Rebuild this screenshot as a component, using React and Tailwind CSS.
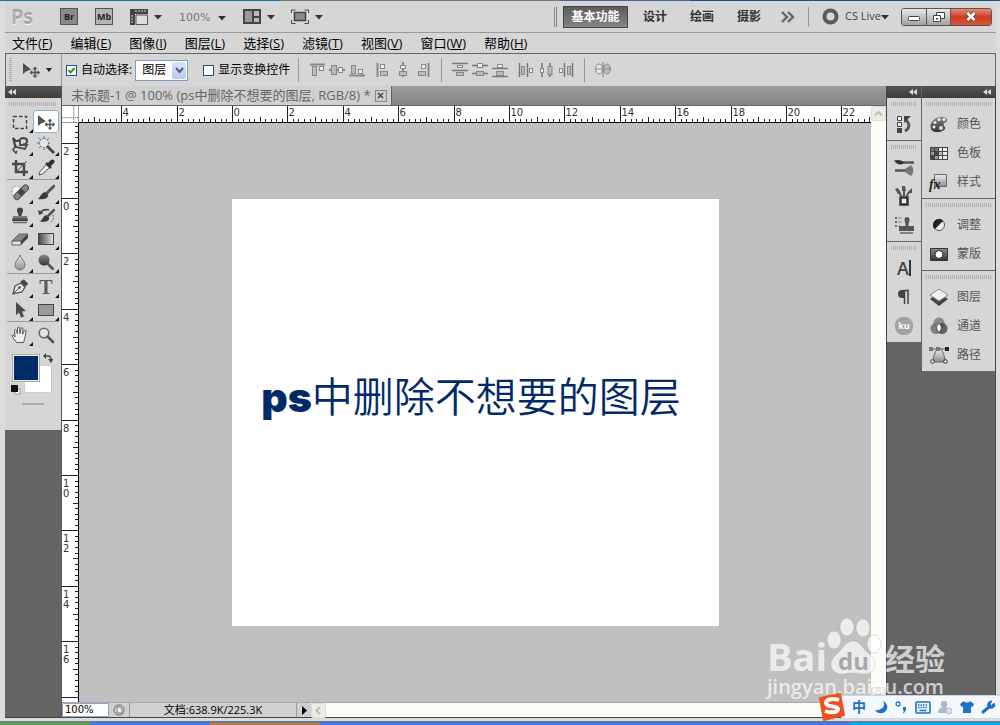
import React, { useState } from 'react';
import clsx from 'clsx';

const menus = [
  ['文件', 'F'],
  ['编辑', 'E'],
  ['图像', 'I'],
  ['图层', 'L'],
  ['选择', 'S'],
  ['滤镜', 'T'],
  ['视图', 'V'],
  ['窗口', 'W'],
  ['帮助', 'H'],
];

/* ---------- icons ---------- */

const Svg = ({ w = 18, h = 18, children, className }) => (
  <svg width={w} height={h} viewBox={`0 0 ${w} ${h}`} fill="none" className={clsx('shrink-0', className)} aria-hidden="true">
    {children}
  </svg>
);

const Defs = () => (
  <svg width="0" height="0" className="absolute" aria-hidden="true">
    <defs>
      <linearGradient id="dark" x1="0" y1="0" x2="0" y2="1">
        <stop offset="0" stopColor="#8a8a8a" />
        <stop offset="1" stopColor="#333" />
      </linearGradient>
      <linearGradient id="ramp" x1="0" y1="0" x2="1" y2="0">
        <stop offset="0" stopColor="#444" />
        <stop offset="1" stopColor="#e4e4e4" />
      </linearGradient>
      <linearGradient id="soft" x1="0" y1="0" x2="0" y2="1">
        <stop offset="0" stopColor="#f0f0f0" />
        <stop offset="1" stopColor="#8c8c8c" />
      </linearGradient>
    </defs>
  </svg>
);

const Caret = () => (
  <Svg w={8} h={6}><path d="M0 1h8L4 5.500z" fill="#333" /></Svg>
);

const MoveIcon = () => (
  <Svg w={18} h={16}>
    <path d="M1 1v11l3-2.500 5-2z" fill="#505050" />
    <path d="M13 6v9M8.500 10.500h9" stroke="#555" strokeWidth="1.500" />
    <path d="M13 4.500l-2.500 2.700h5zM13 16l-2.500-2.500h5zM7.500 10.500l2.700-2.500v5zM18 10.500l-2.500-2.500v5z" fill="#555" />
  </Svg>
);

const tools = {
  marquee: (
    <Svg><rect x="2.500" y="3.500" width="13" height="12" stroke="#444" strokeWidth="1.500" strokeDasharray="3.500 2" /></Svg>
  ),
  move: <MoveIcon />,
  lasso: (
    <Svg>
      <path d="M2 2l3 3 4-1v5l7 0-2 4-9-2z" stroke="#4a4a4a" strokeWidth="1.800" fill="#d9d9d9" />
      <path d="M9 3.500c1-2 7-2 7 1.500 0 3-2 4-4 3" stroke="#4a4a4a" strokeWidth="2.200" />
      <path d="M2 2l2 9-2 3 3 3 1-2" stroke="#4a4a4a" strokeWidth="1.600" />
    </Svg>
  ),
  wand: (
    <Svg>
      <circle cx="7" cy="7" r="4.500" fill="#e6e6e6" stroke="#777" strokeDasharray="1.500 1.500" />
      <path d="M7 0v3M7 11v3M0 7h3M11 7h2M2 2l2 2M12 2l-2 2M2 12l2-2" stroke="#777" />
      <path d="M10 10l7 7" stroke="#444" strokeWidth="2.800" />
    </Svg>
  ),
  crop: (
    <Svg>
      <path d="M5 1v12h12M1 5h12v12" stroke="#4a4a4a" strokeWidth="2.500" />
      <path d="M5 13L16 2" stroke="#4a4a4a" />
    </Svg>
  ),
  dropper: (
    <Svg>
      <path d="M2 16l1-3.500L10 5l3 3-7.500 7z" fill="#f0f0f0" stroke="#555" />
      <path d="M9 4l5 5M11 6l3.500-3.500" stroke="#333" strokeWidth="2.500" />
      <path d="M12.500 5.500L15.500 2.500" stroke="#333" strokeWidth="4" strokeLinecap="round" />
    </Svg>
  ),
  heal: (
    <Svg>
      <path d="M9 3c-3-2-8-1-8 4 0 4 1 6 4 7" stroke="#888" strokeDasharray="2 1.500" fill="#f4f4f4" />
      <path d="M6 12.500L14.500 4" stroke="#555" strokeWidth="7" strokeLinecap="round" />
      <path d="M6 12.500L14.500 4" stroke="#858585" strokeWidth="5" strokeLinecap="round" />
      <rect x="7.500" y="5.500" width="5.500" height="5.500" fill="#444" transform="rotate(45 10.250 8.250)" />
    </Svg>
  ),
  brush: (
    <Svg>
      <path d="M17 2L9 10" stroke="#555" strokeWidth="3" strokeLinecap="round" />
      <path d="M8 8l3.500 3.500c-1.500 4-5 4-11 3.500 3-1 3-6 7.500-7z" fill="#3a3a3a" />
    </Svg>
  ),
  stamp: (
    <Svg>
      <path d="M6 3.500a3 3 0 016 0c0 2-1.500 2.500-1.500 6h-3c0-3.500-1.500-4-1.500-6z" fill="#444" />
      <path d="M2 9h14l1 5H1z" fill="url(#dark)" />
      <path d="M2 15.500h14" stroke="#666" strokeWidth="1.500" />
    </Svg>
  ),
  history: (
    <Svg>
      <path d="M17 3l-7 7" stroke="#555" strokeWidth="2.500" strokeLinecap="round" />
      <path d="M9 8l3.500 3.500c-2 4-6 3.500-10 3 3-1 3-5 6.500-6.500z" fill="#3a3a3a" />
      <path d="M3 6c2-3 5-4 9-3" stroke="#444" strokeWidth="1.500" />
      <path d="M1 3l1 5 4.500-2z" fill="#444" />
      <path d="M16 8c1 3 0 6-3 8" stroke="#555" strokeDasharray="1.500 1.500" />
    </Svg>
  ),
  eraser: (
    <Svg>
      <path d="M1 11L8 4h9l-7 7z" fill="#858585" stroke="#666" />
      <path d="M1 11h9v4H1z" fill="#e4e4e4" stroke="#666" />
      <path d="M10 11l7-7v4l-7 7z" fill="#444" />
    </Svg>
  ),
  gradient: (
    <Svg><rect x="1.500" y="3.500" width="15" height="11" fill="url(#ramp)" stroke="#444" /></Svg>
  ),
  blur: (
    <Svg><path d="M9 2c1 4 5 6 5 10a5 5 0 01-10 0c0-4 4-6 5-10z" fill="url(#soft)" stroke="#777" /></Svg>
  ),
  dodge: (
    <Svg>
      <path d="M9.500 9.500l7 7" stroke="#555" strokeWidth="2.500" />
      <circle cx="7" cy="7" r="5.500" fill="url(#dark)" />
    </Svg>
  ),
  pen: (
    <Svg>
      <path d="M2 16l2-8 6-3 4 4-3 5z" fill="#e8e8e8" stroke="#555" strokeWidth="1.300" />
      <path d="M2 16l6-6" stroke="#444" />
      <circle cx="8.500" cy="9.500" r="1.300" fill="#444" />
      <path d="M10 3l5 5M12 2l4.500 4.500" stroke="#444" strokeWidth="2" />
    </Svg>
  ),
  type: <span className="font-['Liberation_Serif',serif] text-xl leading-none font-bold text-[#5c5c5c]">T</span>,
  path: (
    <Svg><path d="M5 1v13l3-2.500 2 5 3-1-2-5 4-.500z" fill="#4a4a4a" /></Svg>
  ),
  shape: (
    <Svg><rect x="1.500" y="3.500" width="15" height="11" fill="#9a9a9a" stroke="#444" /></Svg>
  ),
  hand: (
    <Svg>
      <path
        d="M5.500 16.500c-1-2-4-4.500-4.500-7 .500-1.200 2-.500 3 1.500L3.500 4.500c.200-1.300 1.700-1.300 2 0L6.500 8V2c.300-1.300 1.900-1.300 2.100 0L9 7.500l1-5c.500-1.200 2-.900 2 .300l-.400 5.400 1.800-3.500c.700-1 2-.500 1.700.700-.700 3-1.100 7.600-2.600 11.100z"
        fill="#eee" stroke="#555"
      />
    </Svg>
  ),
  zoom: (
    <Svg>
      <circle cx="7" cy="7" r="4.800" stroke="#666" strokeWidth="1.500" fill="#e2e2e2" />
      <path d="M10.500 10.500l5.500 5.500" stroke="#555" strokeWidth="2.500" strokeLinecap="round" />
    </Svg>
  ),
};

const toolGroups = [
  ['marquee', 'move', 'lasso', 'wand', 'crop', 'dropper'],
  ['heal', 'brush', 'stamp', 'history', 'eraser', 'gradient', 'blur', 'dodge'],
  ['pen', 'type', 'path', 'shape'],
  ['hand', 'zoom'],
];

/* One drawing per align / distribute command, two boxes and a guide line */
const alignShapes = {
  top: <><path d="M1 2.500h15" stroke="#888" strokeWidth="2" /><rect x="3.500" y="4.500" width="4" height="9" fill="#bbb" stroke="#888" /><rect x="10.500" y="4.500" width="4" height="4" fill="#eee" stroke="#888" /></>,
  middle: <><path d="M0 8h16" stroke="#888" strokeWidth="2" /><rect x="2.500" y="3.500" width="5" height="9" fill="#bbb" stroke="#888" /><rect x="9.500" y="5.500" width="4" height="5" fill="#eee" stroke="#888" /></>,
  bottom: <><path d="M0 13.500h16" stroke="#888" strokeWidth="2" /><rect x="2.500" y="3.500" width="4" height="8" fill="#bbb" stroke="#888" /><rect x="9.500" y="7.500" width="4" height="4" fill="#eee" stroke="#888" /></>,
  left: <><path d="M2.500 1v14" stroke="#888" strokeWidth="2" /><rect x="5.500" y="2.500" width="4" height="4" fill="#eee" stroke="#888" /><rect x="5.500" y="9.500" width="7" height="4" fill="#bbb" stroke="#888" /></>,
  center: <><path d="M8 0v15" stroke="#888" strokeWidth="2" /><rect x="5.500" y="3.500" width="5" height="3" fill="#eee" stroke="#888" /><rect x="4.500" y="9.500" width="7" height="4" fill="#bbb" stroke="#888" /></>,
  right: <><path d="M13.500 1v14" stroke="#888" strokeWidth="2" /><rect x="6.500" y="2.500" width="4" height="4" fill="#eee" stroke="#888" /><rect x="3.500" y="9.500" width="7" height="4" fill="#bbb" stroke="#888" /></>,
  distTop: <><path d="M0 1.500h16M0 8.500h16" stroke="#777" strokeWidth="1.500" /><rect x="5.500" y="3.500" width="5" height="2" fill="#eee" stroke="#888" /><rect x="4.500" y="10.500" width="7" height="3" fill="#bbb" stroke="#888" /></>,
  distMiddle: <><path d="M0 3.500h16M0 11.500h16" stroke="#777" strokeWidth="1.500" /><rect x="5.500" y="1.500" width="5" height="4" fill="#eee" stroke="#888" /><rect x="4.500" y="9.500" width="7" height="4" fill="#bbb" stroke="#888" /></>,
  distBottom: <><path d="M0 6.500h16M0 14.500h16" stroke="#777" strokeWidth="1.500" /><rect x="5.500" y="2.500" width="5" height="3" fill="#eee" stroke="#888" /><rect x="4.500" y="9.500" width="7" height="4" fill="#bbb" stroke="#888" /></>,
  distLeft: <><path d="M1.500 1v14M9.500 1v14" stroke="#777" strokeWidth="1.500" /><rect x="3.500" y="4.500" width="3" height="8" fill="#bbb" stroke="#888" /><rect x="11.500" y="6.500" width="3" height="4" fill="#eee" stroke="#888" /></>,
  distCenter: <><path d="M4 1v14M12 1v14" stroke="#777" strokeWidth="1.500" /><rect x="2.500" y="6.500" width="3" height="4" fill="#eee" stroke="#888" /><rect x="10" y="4.500" width="4" height="8" fill="#bbb" stroke="#888" /></>,
  distRight: <><path d="M6.500 1v14M14.500 1v14" stroke="#777" strokeWidth="1.500" /><rect x="1.500" y="6.500" width="3" height="4" fill="#eee" stroke="#888" /><rect x="9.500" y="4.500" width="3" height="8" fill="#bbb" stroke="#888" /></>,
  auto: <><path d="M8 0v15" stroke="#777" /><ellipse cx="4" cy="7" rx="3.500" ry="5" fill="#e4e4e4" stroke="#888" /><ellipse cx="12" cy="7" rx="3.500" ry="5" fill="#bbb" stroke="#888" /><path d="M1 7h14" stroke="#888" /></>,
};

const alignGroups = [
  [['top', 'middle', 'bottom'], ['left', 'center', 'right']],
  [['distTop', 'distMiddle', 'distBottom'], ['distLeft', 'distCenter', 'distRight']],
  [['auto']],
];

const panelIcons = {
  历史记录: (
    <Svg w={20} h={20}>
      <path d="M3.500 2.500h4v4h-4zM3.500 8.500h4v4h-4z" fill="#eee" stroke="#444" />
      <path d="M3 14h5v5H3z" fill="#444" />
      <path d="M11 17c5-3 5-7 1-11" stroke="#555" strokeWidth="2.800" />
      <path d="M10 9V2h7z" fill="#444" />
    </Svg>
  ),
  画笔: (
    <Svg w={20} h={20}>
      <path d="M8 5.500h12" stroke="#555" strokeWidth="2.500" />
      <path d="M0 3.500c4-1 7-1 10 2-3 3.500-7 2.500-10-2z" fill="#333" />
      <path d="M1 13.500h11" stroke="#555" strokeWidth="2.500" />
      <path d="M11 12l6-4c3 3 3 8 0 11l-6-4z" fill="#777" />
    </Svg>
  ),
  画笔预设: (
    <Svg w={20} h={20}>
      <path d="M6.500 11.500h7v7h-7z" fill="#eee" stroke="#333" strokeWidth="2.500" />
      <path d="M8 11L4 5M10 11V4M12 11l4-6" stroke="#555" strokeWidth="2" />
      <path d="M1 3l3-1 3 5-3 1zM8 0h3l1 5H8zM18 2l0 5-5 0z" fill="#555" />
    </Svg>
  ),
  仿制源: (
    <Svg w={20} h={20}>
      <path d="M1 3h2M1 7h2M1 11h2" stroke="#444" strokeWidth="1.500" />
      <path d="M4 3h4M4 7h4M4 11h2" stroke="#888" />
      <path d="M10.500 4.500a2.500 2.500 0 015 0c0 2-1 3-1 6.500H20v5H5v-5h6.500c0-3.500-1-4.500-1-6.500z" fill="#555" />
      <path d="M6 18h13" stroke="#666" strokeWidth="1.500" />
    </Svg>
  ),
  字符: <span className="border-r-2 border-[#333] font-['Open_Sans',sans-serif] text-lg leading-4 font-semibold text-[#444]">A</span>,
  段落: (
    <Svg w={20} h={20}>
      <path d="M10 3H8a4 4 0 000 8h2z" fill="#444" />
      <path d="M9 3.500h6M10.500 3v14M14 3v14" stroke="#444" strokeWidth="1.500" />
    </Svg>
  ),
  ku: (
    <span className="flex h-[18px] w-[18px] items-center justify-center rounded-[8px] bg-[#a3a3a3] font-['Open_Sans',sans-serif] text-[9px] leading-none font-bold text-white">
      ku
    </span>
  ),
  颜色: (
    <Svg w={20} h={20}>
      <path d="M2 15C0 10 4 4 11 3c7-1 9 4 6 5s-3 3-1 5-4 6-9 5c-3 0-4-1-5-3z" fill="url(#dark)" />
      <circle cx="6" cy="8.500" r="1.500" fill="#eee" />
      <circle cx="10" cy="5.500" r="1.500" fill="#eee" />
      <circle cx="15" cy="5.500" r="1.500" fill="#eee" />
      <circle cx="5" cy="13" r="1.500" fill="#eee" />
      <circle cx="12" cy="14" r="2" fill="#ddd" />
    </Svg>
  ),
  色板: (
    <Svg w={20} h={20}>
      <path d="M1 4h18v13H1z" fill="#444" />
      <path d="M2 5h3v3H2zM6 5h3v3H6z" fill="#777" />
      <path d="M10 5h3v3h-3zM14 5h4v3h-4zM14 9h4v3h-4zM14 13h4v3h-4zM10 13h3v3h-3z" fill="#eee" />
      <path d="M2 9h3v3H2zM6 13h3v3H6z" fill="#999" />
      <path d="M10 9h3v3h-3z" fill="#bbb" />
    </Svg>
  ),
  样式: (
    <span className="relative block h-5 w-5">
      <Svg w={20} h={20}><path d="M5.500 2.500h12v12h-12z" fill="url(#soft)" stroke="#666" /></Svg>
      <span className="absolute bottom-0 left-0 font-['Liberation_Serif',serif] text-sm leading-none font-bold text-[#222] italic">fx</span>
    </span>
  ),
  调整: (
    <Svg w={20} h={20}>
      <circle cx="10" cy="10" r="5.500" fill="#eee" stroke="#555" />
      <path d="M5.700 14.300A6 6 0 0114.300 5.700z" fill="#222" />
    </Svg>
  ),
  蒙版: (
    <Svg w={20} h={20}>
      <path d="M1.500 4.500h17v12h-17z" fill="url(#dark)" stroke="#333" />
      <circle cx="10" cy="10.500" r="4" fill="#fff" stroke="#222" />
    </Svg>
  ),
  图层: (
    <Svg w={20} h={20}>
      <path d="M1 12l9-6 9 6-9 7z" fill="#444" />
      <path d="M1 8l9-6 9 6-9 6z" fill="#f2f2f2" stroke="#888" />
    </Svg>
  ),
  通道: (
    <Svg w={20} h={20}>
      <circle cx="10" cy="7" r="5.500" fill="#888" />
      <circle cx="7" cy="12.500" r="5.500" fill="#777" opacity=".9" />
      <circle cx="13" cy="12.500" r="5.500" fill="#444" opacity=".8" />
      <path d="M10 8c2 2 3 4 0 8-3-4-2-6 0-8z" fill="#fff" />
    </Svg>
  ),
  路径: (
    <Svg w={20} h={20}>
      <path d="M4 17c0-6 2-9 4-13h4c2 4 4 7 4 13z" fill="url(#soft)" stroke="#666" />
      <path d="M2 4h16" stroke="#666" />
      <path d="M0 2h4v4H0zM7 2h4v4H7z" fill="#777" />
      <path d="M16 2h4v4h-4z" fill="#222" />
      <circle cx="3.500" cy="16.500" r="1.800" fill="#eee" stroke="#333" />
      <circle cx="16.500" cy="16.500" r="1.800" fill="#eee" stroke="#333" />
    </Svg>
  ),
};

const iconPanels = [['历史记录'], ['画笔', '画笔预设', '仿制源'], ['字符', '段落', 'ku']];
const labelPanels = [['颜色', '色板', '样式'], ['调整', '蒙版'], ['图层', '通道', '路径']];

/* ---------- small parts ---------- */

const Grip = () => (
  <div className="h-1 bg-[repeating-linear-gradient(90deg,#b2b2b2_0_1px,#d6d6d6_1px_2px)]" />
);

const Divider = () => <div className="h-6 w-px shrink-0 bg-[#999]" />;

const Collapse = ({ className }) => (
  <button aria-label="折叠面板" className={clsx('flex h-3 items-center bg-gradient-to-b from-[#555] to-[#3d3d3d]', className)}>
    <Svg w={8} h={6}><path d="M4 0v6L0 3zM8 0v6L4 3z" fill="#ddd" /></Svg>
  </button>
);

/* ---------- bars ---------- */

const TitleBar = () => (
  <header className="flex h-8 shrink-0 items-center border-b border-[#999] bg-[#d6d6d6] pr-1 pl-1.5">
    <span className="w-[50px] font-['Open_Sans',sans-serif] text-[20px] leading-none font-semibold text-[#adadad] [text-shadow:0_1px_0_#f4f4f4,0_-1px_0_#999]">Ps</span>
    <button aria-label="Bridge" className="flex h-[15px] w-4 items-center justify-center bg-[#8a8a8a] font-['Open_Sans',sans-serif] text-[9px] font-bold text-[#222] outline outline-[#555]">
      Br
    </button>
    <button aria-label="Mini Bridge" className="ml-[19px] flex h-[15px] w-4 items-center justify-center bg-[#b4b4b4] font-['Open_Sans',sans-serif] text-[9px] font-bold text-[#222] outline outline-[#555]">
      Mb
    </button>
    <button aria-label="查看额外内容" className="ml-[18px] flex items-center gap-1.5">
      <Svg w={18} h={16}>
        <path d="M0 0h18v5H0zM0 5h5v11H0z" fill="#444" />
        <path d="M6 1v2M9 1v2M12 1v2M15 1v2M1 7h2M1 10h2M1 13h2" stroke="#ddd" />
        <path d="M6 6h11.500v9.500H6z" fill="#ddd" stroke="#555" />
      </Svg>
      <Caret />
    </button>
    <button className="ml-[17px] flex items-center gap-2 pt-0.5 font-['DejaVu_Sans',sans-serif] text-[11px] leading-none text-[#777]">
      100%
      <Caret />
    </button>
    <button aria-label="排列文档" className="ml-[17px] flex items-center gap-1.5">
      <Svg w={18} h={16}>
        <path d="M0 0h18v15H0z" fill="#444" />
        <path d="M2 2h7v11H2z" fill="#999" />
        <path d="M11 2h5v5h-5zM11 9h5v4h-5z" fill="#bbb" />
      </Svg>
      <Caret />
    </button>
    <button aria-label="屏幕模式" className="ml-4 flex items-center gap-1.5">
      <Svg w={18} h={16}>
        <path d="M.5 4V1h4M13.500 1h4v3M17.500 11v3.500h-4M4.500 14.500h-4V11" stroke="#444" />
        <rect x="3.500" y="3.500" width="11" height="8" fill="#8a8a8a" stroke="#444" strokeWidth="1.500" />
      </Svg>
      <Caret />
    </button>

    <div className="ml-auto flex items-center">
      <div className="h-5 w-[3px] border-x border-[#888]" />
      <nav className="ml-1.5 flex items-center gap-[23px] text-xs font-bold text-[#333]">
        <button className="-mr-2 h-[22px] w-[65px] border border-[#444] bg-gradient-to-b from-[#5c5c5c] to-[#858585] text-white">基本功能</button>
        <button>设计</button>
        <button>绘画</button>
        <button>摄影</button>
      </nav>
      <button aria-label="更多工作区" className="ml-5">
        <Svg w={14} h={12}><path d="M1 1l5 5-5 5M7 1l5 5-5 5" stroke="#666" strokeWidth="2.400" /></Svg>
      </button>
      <div className="ml-[13px] h-5 w-px bg-[#999]" />
      <button className="ml-[13px] flex items-center gap-1.5 text-[11px] text-[#444]">
        <Svg w={17} h={17}><circle cx="8.500" cy="8.500" r="6" stroke="#5a5a5a" strokeWidth="4" /></Svg>
        <span className="flex items-center font-['Open_Sans',sans-serif]">CS Live<Caret /></span>
      </button>
      <div className="ml-3 flex h-[18px] overflow-hidden rounded-[3px] border border-[#555]">
        <button aria-label="最小化" className="flex w-6 items-center justify-center bg-gradient-to-b from-[#e8e8e8] to-[#a2a2a2] pt-1">
          <Svg w={12} h={5}><rect x=".5" y=".5" width="11" height="4" rx="1" fill="#fff" stroke="#444" /></Svg>
        </button>
        <button aria-label="还原" className="flex w-[25px] items-center justify-center border-x border-[#555] bg-gradient-to-b from-[#e8e8e8] to-[#a2a2a2]">
          <Svg w={13} h={12}>
            <path d="M4.500 1.500h8v6h-8z" fill="#fff" stroke="#444" />
            <path d="M1.500 4.500h7v6h-7z" fill="#fff" stroke="#444" />
            <path d="M4 7h2v1.500H4z" fill="#444" />
          </Svg>
        </button>
        <button aria-label="关闭" className="flex w-10 items-center justify-center bg-gradient-to-b from-[#e38a72] via-[#cf3a22] to-[#d2553a]">
          <Svg w={12} h={11}>
            <path d="M2.500 2l7 7M9.500 2l-7 7" stroke="#444" strokeWidth="4.500" />
            <path d="M2.500 2l7 7M9.500 2l-7 7" stroke="#fff" strokeWidth="2.800" />
          </Svg>
        </button>
      </div>
    </div>
  </header>
);

const MenuBar = () => (
  <nav className="flex h-5 shrink-0 items-center gap-[18px] bg-[#d6d6d6] pl-[7px] text-[13px] leading-5 text-black">
    {menus.map(([label, key]) => (
      <button key={key} className="whitespace-nowrap">
        {label}(<u>{key}</u>)
      </button>
    ))}
  </nav>
);

const Check = ({ checked, onChange, children }) => (
  <label className="flex items-center gap-1 whitespace-nowrap">
    <span className="relative flex">
      <input
        type="checkbox"
        checked={checked}
        onChange={onChange}
        className="h-[11px] w-[11px] appearance-none border border-[#1d5281] bg-white"
      />
      {checked && (
        <Svg w={11} h={11} className="pointer-events-none absolute inset-0">
          <path d="M2.500 5l2 2.500 4-4.500" stroke="#21a121" strokeWidth="2" />
        </Svg>
      )}
    </span>
    {children}
  </label>
);

const OptionsBar = () => {
  const [autoSelect, setAutoSelect] = useState(true);
  const [showTransform, setShowTransform] = useState(false);

  return (
    <div className="flex h-[33px] shrink-0 items-center border border-b-0 border-[#666] bg-[#d6d6d6] pl-[3px] text-xs text-black">
      <div className="h-6 w-[3px] bg-[repeating-linear-gradient(#aaa_0_1px,#d6d6d6_1px_2px)]" />
      <button aria-label="移动工具" className="ml-2.5 flex items-center gap-1.5">
        <MoveIcon />
        <Svg w={6} h={4}><path d="M0 0h6L3 4z" fill="#222" /></Svg>
      </button>
      <div className="mx-[9px] mr-1 h-8 w-px bg-[#999]" />
      <Check checked={autoSelect} onChange={() => setAutoSelect(!autoSelect)}>自动选择:</Check>
      <div className="relative ml-[3px] flex">
        <select aria-label="自动选择" className="h-[21px] w-[53px] appearance-none border border-[#7f9db9] bg-white pl-1.5 text-xs">
          <option>图层</option>
          <option>组</option>
        </select>
        <span className="pointer-events-none absolute top-[2px] right-[2px] flex h-[17px] w-3.5 items-center justify-center rounded-xs bg-gradient-to-b from-[#dbe5fd] to-[#b4c8f5]">
          <Svg w={9} h={7}><path d="M1 1l3.500 4L8 1" stroke="#4d6185" strokeWidth="2" /></Svg>
        </span>
      </div>
      <div className="ml-[15px] flex">
        <Check checked={showTransform} onChange={() => setShowTransform(!showTransform)}>显示变换控件</Check>
      </div>
      <div className="ml-2 flex items-center gap-2.5">
        {alignGroups.map((group, i) => (
          <React.Fragment key={i}>
            <Divider />
            <div className="flex gap-2.5">
              {group.map((names) => (
                <div key={names[0]} className="flex gap-1">
                  {names.map((name) => (
                    <button key={name} aria-label={name}>
                      <Svg w={16} h={16}>{alignShapes[name]}</Svg>
                    </button>
                  ))}
                </div>
              ))}
            </div>
          </React.Fragment>
        ))}
      </div>
    </div>
  );
};

/* ---------- toolbox ---------- */

const Toolbox = () => {
  const [active, setActive] = useState('move');

  return (
    <aside className="w-[57px] shrink-0 border-r border-[#555] bg-[#646464]">
      <Collapse className="w-full pl-[3px]" />
      <div className="h-[332px] bg-[#d6d6d6] pt-1">
        <div className="mx-1"><Grip /></div>
        <div className="mt-1 flex flex-col gap-0.5">
          {toolGroups.map((group, i) => (
            <div key={group[0]} className="relative grid grid-cols-[26px_26px] pl-0.5">
              {i > 0 && <div className="absolute inset-x-0.5 -top-0.5 h-px bg-[#999]" />}
              {group.map((name) => (
                <button
                  key={name}
                  aria-label={name}
                  onClick={() => setActive(name)}
                  className={clsx(
                    'relative flex h-[23px] items-center justify-center rounded-[3px]',
                    active === name && 'bg-white outline-1 -outline-offset-1 outline-[#8fb2cc]'
                  )}
                >
                  {tools[name]}
                  {name !== 'move' && name !== 'zoom' && (
                    <Svg w={4} h={4} className="absolute right-0 bottom-0"><path d="M4 0v4H0z" fill="#111" /></Svg>
                  )}
                </button>
              ))}
            </div>
          ))}
        </div>

        {/* Foreground / background colours */}
        <div className="relative mx-1 mt-[7px] h-[42px]">
          <button aria-label="背景色" className="absolute top-3 left-[15px] h-7 w-7 border border-[#ccc] bg-white" />
          <button aria-label="前景色" className="absolute top-0.5 left-1 h-[26px] w-[26px] border border-[#eee] bg-[#032a68] outline outline-[#aaa]" />
          <button aria-label="切换颜色" className="absolute top-0 right-1">
            <Svg w={10} h={10}>
              <path d="M2 3h3c2 0 3 1 3 4" stroke="#444" strokeWidth="1.500" />
              <path d="M3 0v6L0 3zM5 6h5.500L8 10z" fill="#444" />
            </Svg>
          </button>
          <button aria-label="默认颜色" className="absolute bottom-0 left-0.5">
            <Svg w={10} h={10}>
              <path d="M4 4h5v5H4z" fill="#fff" stroke="#999" />
              <path d="M0 0h7v7H0z" fill="#111" />
            </Svg>
          </button>
        </div>
        <div className="mx-auto mt-2 h-0.5 w-[22px] bg-[#aaa]" />
      </div>
    </aside>
  );
};

/* ---------- rulers: 2 units span 55.4px, labels count away from the page edge ---------- */

const STEP = 55.4;

const ruler = (origin, from, to) => {
  const ticks = [];
  for (let i = from * 10; i <= to * 10; i++) {
    const major = i % 10 === 0;
    const inner = i > from * 10 && i < to * 10;
    ticks.push({
      pos: Math.round(origin + (i * STEP) / 10) + 0.5,
      start: major ? 0 : i % 5 === 0 ? 11 : 13,
      label: major && inner ? String(Math.abs(i / 5)) : '',
    });
  }
  return ticks;
};

const HRuler = () => (
  <svg className="h-[17px] w-full min-w-0 flex-1 border-b border-black bg-white font-['DejaVu_Sans',sans-serif] text-[10px]" shapeRendering="crispEdges">
    {ruler(153, -3, 12).map((t) => (
      <g key={t.pos}>
        <path d={`M${t.pos} ${t.start}V17`} stroke="#222" />
        {t.label && <text x={t.pos + 1} y="10" fill="#333">{t.label}</text>}
      </g>
    ))}
  </svg>
);

const VRuler = () => (
  <svg className="h-full w-[17px] shrink-0 border-r border-black bg-white font-['DejaVu_Sans',sans-serif] text-[10px]" shapeRendering="crispEdges">
    {ruler(75, -2, 9).map((t) => (
      <g key={t.pos}>
        <path d={`M${t.start} ${t.pos}H17`} stroke="#222" />
        {t.label.split('').map((digit, i) => (
          <text key={i} x="1" y={t.pos + 11 + i * 10} fill="#333">{digit}</text>
        ))}
      </g>
    ))}
  </svg>
);

const ScrollButton = ({ label, d }) => (
  <button aria-label={label} className="flex h-[15px] w-[15px] shrink-0 items-center justify-center rounded-xs border border-[#e0dfd2] bg-[#eeede5]">
    <Svg w={9} h={9}><path d={d} stroke="#c0c0b4" strokeWidth="2" /></Svg>
  </button>
);

const DocumentArea = () => (
  <main className="flex min-w-0 flex-1 flex-col">
    <div className="flex h-5 shrink-0 items-end border-b border-[#666] bg-gradient-to-b from-[#9c9c9c] to-[#858585]">
      <div className="flex h-full items-center gap-1 border-r border-[#666] bg-[#d0d0d0] pr-1 pl-[9px] text-[13px] leading-none whitespace-nowrap text-[#666]">
        <span>未标题-1 @ 100% (ps中删除不想要的图层, RGB/8) *</span>
        <button aria-label="关闭文档" className="flex h-3 w-3 items-center justify-center border border-[#888] bg-[#ccc]">
          <Svg w={7} h={7}><path d="M1 1l5 5M6 1L1 6" stroke="#444" strokeWidth="1.400" /></Svg>
        </button>
      </div>
    </div>

    <div className="flex min-h-0 flex-1">
      <div className="flex min-w-0 flex-1 flex-col">
        <div className="flex h-[17px] shrink-0">
          <Svg w={17} h={17} className="border-r border-b border-[#999] bg-white">
            <path d="M12.500 0v17M0 12.500h17" stroke="#444" strokeDasharray="1 1" />
          </Svg>
          <HRuler />
        </div>
        <div className="flex min-h-0 flex-1">
          <VRuler />
          <div className="flex min-w-0 flex-1 items-center justify-center bg-[#c0c0c0]">
            <div className="flex h-[427px] w-[487px] items-center justify-center bg-white pr-2 pb-8 text-[#032a68]">
              <p className="flex items-baseline whitespace-nowrap">
                <span className="font-['Inter',sans-serif] text-[41px] leading-none font-black">ps</span>
                <span className="text-[41px] leading-none font-[350]">中删除不想要的图层</span>
              </p>
            </div>
          </div>
        </div>
      </div>
      <div className="flex w-[15px] shrink-0 flex-col justify-between bg-[#fdfdf8]">
        <ScrollButton label="向上滚动" d="M1 6.500L4.500 3 8 6.500" />
        <ScrollButton label="向下滚动" d="M1 3L4.500 6.500 8 3" />
      </div>
    </div>

    {/* Status bar */}
    <footer className="flex h-[15px] shrink-0 items-stretch border-t border-[#aaa] bg-[#fdfdf8] text-[11px] leading-[14px] text-black">
      <input aria-label="缩放比例" defaultValue="100%" className="w-[47px] border border-[#8fa8c8] bg-white pl-0.5 font-['DejaVu_Sans',sans-serif] text-[10px]" />
      <button aria-label="文档信息" className="flex w-[21px] items-center justify-center border-r border-[#999] bg-[#d0d0d0]">
        <Svg w={12} h={12}>
          <circle cx="6" cy="6" r="5" stroke="#888" fill="#ddd" strokeWidth="1.300" />
          <path d="M4 3h3l2 2v4H4z" stroke="#777" fill="#eee" />
        </Svg>
      </button>
      <span className="w-[167px] border-r border-[#999] bg-[#d0d0d0] text-center">文档:638.9K/225.3K</span>
      <button aria-label="状态栏选项" className="flex w-[14px] items-center justify-center bg-[#d0d0d0]">
        <Svg w={6} h={9}><path d="M1 0v9l5-4.500z" fill="#000" /></Svg>
      </button>
      <ScrollButton label="向左滚动" d="M6 1L2.500 4.500 6 8" />
      <div className="ml-auto flex w-[30px]">
        <ScrollButton label="向右滚动" d="M3 1l3.500 3.500L3 8" />
      </div>
    </footer>
  </main>
);

/* ---------- right dock ---------- */

const DockColumn = ({ panels, labelled, className }) => (
  <div className={className}>
    <Collapse className="w-full justify-end pr-1" />
    {panels.map((items) => (
      <section key={items[0]} className="border-b border-[#666] bg-[#d6d6d6] pb-0.5">
        <div className="mx-1 pt-1 pb-[3px]"><Grip /></div>
        {items.map((name) => (
          <button
            key={name}
            aria-label={name}
            className={clsx('flex h-[29px] w-full items-center text-xs text-[#555]', labelled ? 'gap-2 pl-[7px]' : 'justify-center')}
          >
            {panelIcons[name]}
            {labelled && name}
          </button>
        ))}
      </section>
    ))}
  </div>
);

const Dock = () => (
  <aside className="flex shrink-0 border-x border-[#444] bg-[#646464]">
    <DockColumn panels={iconPanels} className="w-[34px]" />
    <DockColumn panels={labelPanels} labelled className="w-[74px] border-l border-[#666]" />
  </aside>
);

/* ---------- overlays ---------- */

const Watermark = () => (
  <div className="pointer-events-none absolute right-[55px] bottom-7 w-[178px] font-['Open_Sans','Noto_Sans_CJK_SC',sans-serif] text-white/70">
    <div className="relative flex h-20 items-end">
      <span className="text-[38px] leading-[42px] font-bold">Bai</span>
      <Svg w={56} h={58} className="absolute bottom-0.5 left-[59px]">
        <g fill="#fff" fillOpacity=".7" stroke="#999" strokeOpacity=".3">
          <ellipse cx="8" cy="23" rx="7" ry="9" />
          <ellipse cx="21" cy="10" rx="7" ry="9" />
          <ellipse cx="37" cy="11" rx="7" ry="9" />
          <ellipse cx="48" cy="27" rx="7" ry="9" />
          <path d="M27 24c7 0 9 7 15 12s9 10 5 17-14 3-20 3-15 4-20-3 0-12 5-17 8-12 15-12z" />
        </g>
      </Svg>
      <span className="absolute bottom-0 left-[71px] text-2xl leading-8 font-bold text-[#a8a8a8]">du</span>
      <span className="ml-auto pb-0.5 text-[30px] leading-8 font-bold">经验</span>
    </div>
    <p className="text-[20px] leading-5 font-semibold">jingyan.baidu.com</p>
  </div>
);

const ImeBar = () => (
  <div className="absolute right-0 bottom-[7px] flex h-[22px] w-[158px] items-center justify-between bg-[#f4f8fc] pr-1 text-[#1b73c9] outline outline-[#c6d6e6]">
    <Svg w={28} h={28} className="absolute -top-[3px] -left-6">
      <path d="M2 5l20-4 4 21-20 5z" fill="#f0501e" stroke="#f0501e" strokeWidth="2" strokeLinejoin="round" />
      <path d="M21 7c-5-2-13-1-13 3 0 5 12 2 12 6 0 4-8 4-13 2" stroke="#fff" strokeWidth="4" />
    </Svg>
    <button className="ml-2.5 text-sm leading-5 font-bold">中</button>
    <button aria-label="全半角">
      <Svg w={14} h={14}><path d="M9 1c3 5-1 10-8 9 3 5 10 4 12-1 1-3-1-7-4-8z" fill="#1b73c9" /></Svg>
    </button>
    <button aria-label="中英文标点">
      <Svg w={12} h={14}>
        <circle cx="3" cy="4" r="2" stroke="#1b73c9" strokeWidth="1.300" />
        <path d="M8 7h3v3l-2 3H8l1-2.500H8z" fill="#1b73c9" />
      </Svg>
    </button>
    <button aria-label="软键盘">
      <Svg w={16} h={13}>
        <rect x="1" y="1" width="14" height="11" rx="1" stroke="#1b73c9" strokeWidth="1.600" />
        <path d="M3 4h10M3 6.500h10" stroke="#1b73c9" strokeWidth="1.500" strokeDasharray="1.500 1" />
        <path d="M4.500 9.500h7" stroke="#1b73c9" strokeWidth="1.500" />
      </Svg>
    </button>
    <button aria-label="用户">
      <Svg w={14} h={15}>
        <circle cx="6" cy="4" r="3.300" fill="#aeb8d0" />
        <path d="M0 13c0-5 3-6 6-6s6 1 6 6z" fill="#aeb8d0" />
        <circle cx="11" cy="11" r="3" fill="#dde3ee" stroke="#aeb8d0" />
      </Svg>
    </button>
    <button aria-label="皮肤">
      <Svg w={14} h={14}><path d="M4 1c1 2 5 2 6 0l4 3-1.500 3-1.500-.5V13H3V6.500L1.500 7 0 4z" fill="#1b73c9" /></Svg>
    </button>
    <button aria-label="工具">
      <Svg w={15} h={14}>
        <path d="M2 12l6-5" stroke="#1b73c9" strokeWidth="3" strokeLinecap="round" />
        <path d="M13 3l-2.500 2.500L9 4l2-3C8 1 6 3 7 6s5 3 7 0z" fill="#1b73c9" stroke="#1b73c9" />
      </Svg>
    </button>
  </div>
);

const Taskbar = () => (
  <div className="flex h-[3px] shrink-0">
    <div className="w-[9%] bg-[#55a055]" />
    <div className="w-[12%] bg-[#3a7ce8]" />
    <div className="w-[11%] border-t border-[#3a7ce8] bg-[#c87a28]" />
    <div className="flex-1 bg-[#3a7ce8]" />
    <div className="w-[15%] bg-[#10a4f0]" />
  </div>
);

export default function App() {
  return (
    <div className="relative flex h-screen flex-col overflow-hidden bg-[#777] font-['Open_Sans','Noto_Sans_CJK_SC',sans-serif]">
      <Defs />
      <div className="h-px shrink-0 bg-linear-[90deg,#1c72aa_0_28%,#728074_28%_56%,#4a63a8_56%_69%,#1d4e8f_69%]" />
      <div className="flex min-h-0 flex-1 flex-col border-b border-[#777] bg-[#dcdcdc] pr-1 pb-[3px] pl-[5px]">
        <TitleBar />
        <MenuBar />
        <OptionsBar />
        <div className="flex min-h-0 flex-1 border-b border-[#444]">
          <Toolbox />
          <DocumentArea />
          <Dock />
        </div>
      </div>
      <Taskbar />
      <Watermark />
      <ImeBar />
    </div>
  );
}
